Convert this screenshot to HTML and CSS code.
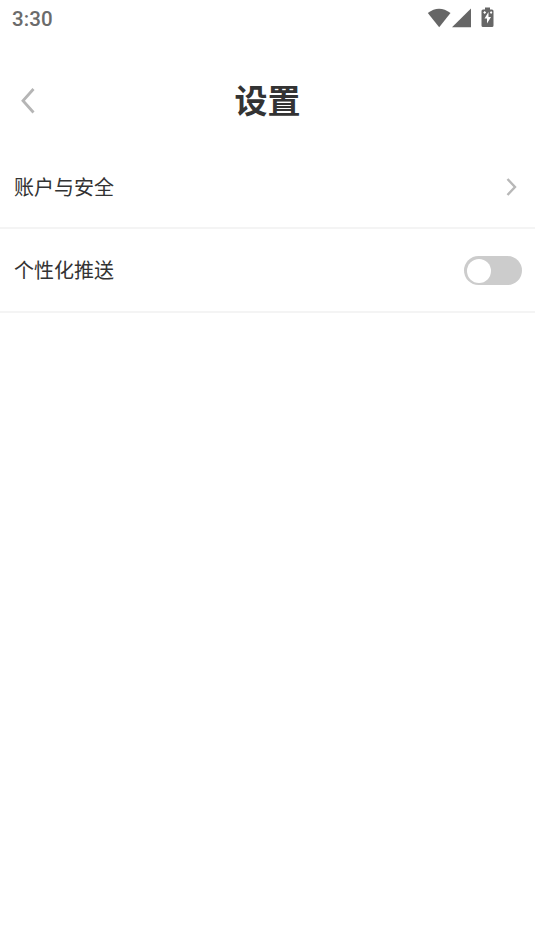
FILE: index.html
```html
<!DOCTYPE html>
<html lang="zh-CN">
<head>
<meta charset="utf-8">
<title>设置</title>
<link rel="stylesheet" href="styles.css">
</head>
<body>
<div class="status">
  <span class="time">3:30</span>
  <svg class="status-icons" width="68" height="22" viewBox="427 6 68 22">
    <path d="M427.800 13Q439 4.500 450.500 13L439.200 27.300Z"/>
    <path d="M471 8.500V27.300H452Z"/>
    <path fill-rule="evenodd" d="M485 7.500h5v2h2q1.500 0 1.500 1.500v14.500q0 1.500-1.500 1.500h-9q-1.500 0-1.500-1.500V11q0-1.500 1.500-1.500h2ZM488.500 12l-4 6.500h2.500v5l4-6.500h-2.500ZM483.200 12.500l1.500 1.500 1.500-1.500-1.500-1.500ZM489.800 12.500l1.300 1.500 1.300-1.500-1.300-1.500Z"/>
  </svg>
</div>
<header class="header">
  <svg class="back" width="16" height="28" viewBox="0 0 16 28"><path d="M13.500 2L3 13.700L13.500 25.500"/></svg>
  <h1 class="title">设置</h1>
</header>
<main>
  <div class="row account">
    <span>账户与安全</span>
    <svg class="chevron" width="12" height="20" viewBox="0 0 12 20"><path d="M1.500 2L9 10L1.500 18"/></svg>
  </div>
  <div class="row push">
    <span class="label">个性化推送</span>
    <span class="switch"><span class="knob"></span></span>
  </div>
</main>
</body>
</html>
```

FILE: styles.css
```css
* { box-sizing: border-box; }
body { margin: 0; min-height: 951px; background: #fff; color: #333; font-family: "Noto Sans CJK SC", sans-serif; }
.status { display: flex; justify-content: space-between; height: 40px; padding: 6px 40px 0 12px; }
.time { font: 500 20.5px/26px Roboto, sans-serif; letter-spacing: .1px; color: #6b6b6b; }
.status-icons { fill: #666; }
.header { display: grid; grid-template-columns: 40px 1fr 40px; align-items: center; height: 105px; }
.back { margin: 17px 0 0 20px; fill: none; stroke: #b5b5b5; stroke-width: 2.8; }
.title { margin: 12px 0 0; text-align: center; font-size: 33px; line-height: 48px; font-weight: 700; }
.row { display: flex; align-items: center; justify-content: space-between; padding: 0 13px 0 14px; border-bottom: 2px solid #f4f4f4; font-size: 20px; line-height: 30px; }
.account { height: 84px; padding-top: 2px; }
.push { height: 84px; }
.label { padding-bottom: 1px; }
.chevron { margin-right: 4px; fill: none; stroke: #b8b8b8; stroke-width: 2.4; }
.switch { display: flex; align-items: center; width: 58px; height: 29px; margin-top: 1px; padding: 3px; border-radius: 15px; background: #ccc; }
.knob { width: 24px; height: 24px; border-radius: 50%; background: #fff; }
```
